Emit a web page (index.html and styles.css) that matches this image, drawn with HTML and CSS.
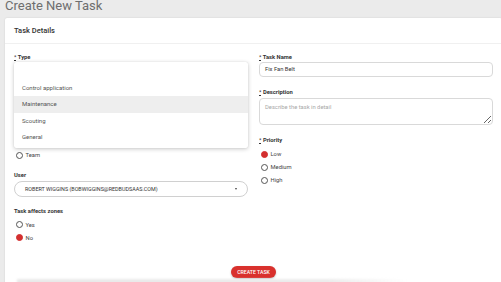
FILE: index.html
```html
<!DOCTYPE html>
<html>
<head>
<meta charset="utf-8">
<link rel="stylesheet" href="styles.css">
</head>
<body>
<h1 class="title">Create New Task</h1>
<div class="card">
  <div class="card-header">Task Details</div>
  <div class="card-body">
    <div class="col col-left">
      <div class="field">
        <div class="label"><abbr class="req">*</abbr> Type</div>
        <div class="input"></div>
      </div>
      <div class="field field-assign">
        <div class="radio"><span class="dot"></span>Team</div>
      </div>
      <div class="field field-user">
        <div class="label">User</div>
        <div class="select">
          <span>ROBERT WIGGINS (BOBWIGGINS@REDBUDSAAS.COM)</span>
          <span class="caret"></span>
        </div>
      </div>
      <div class="field">
        <div class="label label-radio">Task affects zones</div>
        <div class="radio"><span class="dot"></span>Yes</div>
        <div class="radio"><span class="dot on"></span>No</div>
      </div>

      <div class="menu">
        <div class="option"></div>
        <div class="option">Control application</div>
        <div class="option active">Maintenance</div>
        <div class="option">Scouting</div>
        <div class="option">General</div>
      </div>
    </div>
    <div class="col">
      <div class="field">
        <div class="label"><abbr class="req">*</abbr> Task Name</div>
        <div class="input">Fix Fan Belt</div>
      </div>
      <div class="field">
        <div class="label"><abbr class="req">*</abbr> Description</div>
        <textarea class="textarea" placeholder="Describe the task in detail"></textarea>
      </div>
      <div class="field">
        <div class="label label-radio"><abbr class="req">*</abbr> Priority</div>
        <div class="radio"><span class="dot on"></span>Low</div>
        <div class="radio"><span class="dot"></span>Medium</div>
        <div class="radio"><span class="dot"></span>High</div>
      </div>
    </div>
  </div>
  <div class="card-footer">
    <button class="btn">CREATE TASK</button>
    <div class="shade"></div>
  </div>
</div>
</body>
</html>
```

FILE: styles.css
```css
html, body {
  margin: 0;
  padding: 0;
}
body {
  background: #ebebeb;
  font-family: Roboto, "Liberation Sans", sans-serif;
  width: 501px;
  height: 282px;
  overflow: hidden;
}
.title {
  margin: -6px 0 0 5px;
  height: 24px;
  font-size: 13px;
  line-height: 24px;
  font-weight: 400;
  color: #6e6e6e;
}
.card {
  margin-left: 5px;
  width: 497px;
  height: 270px;
  background: #fff;
  border-radius: 2px;
  box-shadow: 0 0 2px rgba(0,0,0,0.12);
}
.card-header {
  height: 25px;
  line-height: 26px;
  padding-left: 9px;
  font-size: 7.5px;
  font-weight: 500;
  color: #333;
  border-bottom: 1px solid #f0f0f0;
}
.card-body {
  display: grid;
  grid-template-columns: 234px 234px;
  column-gap: 11px;
  padding: 8px 0 0 9px;
}
.col {
  display: flex;
  flex-direction: column;
}
.col-left {
  position: relative;
}
.field {
  margin-bottom: 10px;
}
.field-assign {
  margin-top: 61.5px;
  margin-bottom: 8px;
}
.field-user {
  margin-bottom: 9px;
}
.label {
  height: 10px;
  line-height: 10px;
  font-size: 5.8px;
  font-weight: 700;
  color: #333;
}
.label-radio {
  margin-bottom: 2.5px;
}
.req {
  text-decoration: underline dotted;
  text-underline-offset: 1px;
  font-weight: 400;
}
.input {
  box-sizing: border-box;
  height: 15px;
  border: 1px solid #d9d9d9;
  border-radius: 4px;
  padding-left: 5px;
  font-size: 5.8px;
  line-height: 13px;
  color: #333;
}
.textarea {
  display: block;
  box-sizing: border-box;
  width: 234px;
  height: 27px;
  margin: 1px 0 0 0;
  border: 1px solid #d9d9d9;
  border-radius: 4px;
  padding: 5px 5px;
  font-family: Roboto, "Liberation Sans", sans-serif;
  font-size: 5.8px;
  color: #333;
  outline: none;
}
.textarea::placeholder {
  color: #a8a8a8;
}
.select {
  box-sizing: border-box;
  height: 16px;
  margin-top: 1px;
  border: 1px solid #d0d0d0;
  border-radius: 8px;
  padding: 0 10px;
  display: flex;
  align-items: center;
  justify-content: space-between;
  font-size: 5.4px;
  color: #333;
}
.caret {
  width: 0;
  height: 0;
  border-left: 1.8px solid transparent;
  border-right: 1.8px solid transparent;
  border-top: 2.2px solid #444;
}
.radio {
  height: 13px;
  display: flex;
  align-items: center;
  font-size: 5.8px;
  color: #444;
}
.dot {
  box-sizing: border-box;
  width: 7px;
  height: 7px;
  margin: 0 3px 0 1.5px;
  border: 1.1px solid #555;
  border-radius: 50%;
}
.dot.on {
  background: #d32f2f;
  border-color: #d32f2f;
}
.menu {
  position: absolute;
  top: 10px;
  left: 0;
  width: 234px;
  height: 86px;
  box-sizing: border-box;
  padding-top: 1.25px;
  background: #fff;
  border-radius: 2px;
  box-shadow: 0 1px 4px rgba(0,0,0,0.22), 0 0 1px rgba(0,0,0,0.15);
}
.option {
  height: 16.5px;
  line-height: 16.5px;
  padding-left: 8px;
  font-size: 6px;
  color: #555;
}
.option.active {
  background: #eeeeee;
}
.card-footer {
  display: flex;
  flex-direction: column;
  align-items: center;
  padding-top: 12px;
}
.btn {
  width: 45px;
  height: 12px;
  padding: 0;
  border: none;
  border-radius: 6px;
  background: #d9312d;
  color: #fff;
  font-family: Roboto, "Liberation Sans", sans-serif;
  font-size: 5.2px;
  font-weight: 500;
  box-shadow: 0 1px 2px rgba(0,0,0,0.25);
}
.shade {
  align-self: flex-start;
  margin: 1px 0 0 12px;
  width: 390px;
  height: 6px;
  background: linear-gradient(90deg, #e9e9e9 0%, #ececec 80%, rgba(255,255,255,0) 100%);
  filter: blur(1px);
}
```
